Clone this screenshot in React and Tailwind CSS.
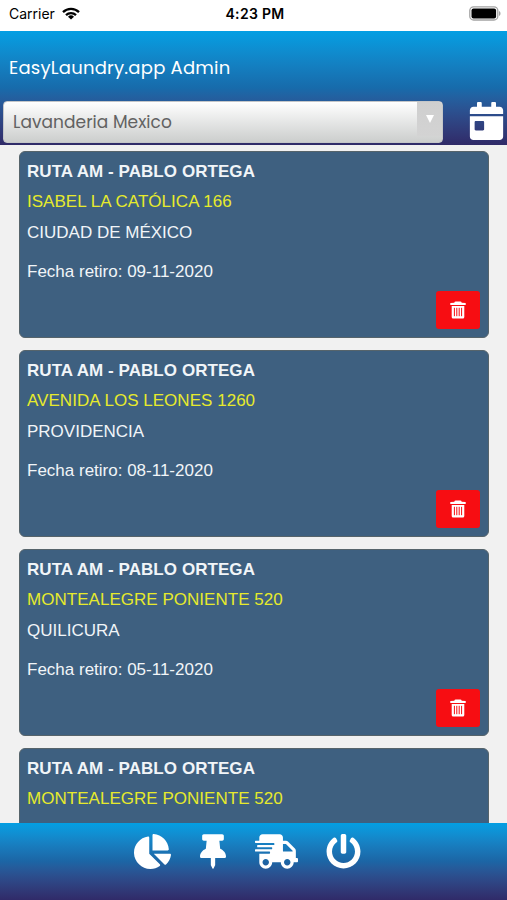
import React from 'react';
import { FaCalendarDay, FaChartPie, FaPowerOff, FaShippingFast, FaThumbtack } from 'react-icons/fa';

const retiros = [
  { id: 1, ruta: 'RUTA AM - PABLO ORTEGA', direccion: 'ISABEL LA CATÓLICA 166', comuna: 'CIUDAD DE MÉXICO', fecha: '09-11-2020' },
  { id: 2, ruta: 'RUTA AM - PABLO ORTEGA', direccion: 'AVENIDA LOS LEONES 1260', comuna: 'PROVIDENCIA', fecha: '08-11-2020' },
  { id: 3, ruta: 'RUTA AM - PABLO ORTEGA', direccion: 'MONTEALEGRE PONIENTE 520', comuna: 'QUILICURA', fecha: '05-11-2020' },
  { id: 4, ruta: 'RUTA AM - PABLO ORTEGA', direccion: 'MONTEALEGRE PONIENTE 520', comuna: 'QUILICURA', fecha: '' },
];

function StatusBar() {
  return (
    <div className="h-[31px] shrink-0 bg-white text-black grid grid-cols-3 items-center pl-[9px] pr-[6px] pb-[4px] font-['Inter',sans-serif]">
      <div className="flex items-center gap-[7px]">
        <span className="text-[14px] leading-none">Carrier</span>
        <svg width="18" height="13" viewBox="0 0 18 13" fill="none" stroke="black" strokeWidth="2.3">
          <path d="M1 5.1a11.5 11.5 0 0 1 16 0" />
          <path d="M4 8.2a7.2 7.2 0 0 1 10 0" />
          <path d="M9 12.6 6 9.8a4.3 4.3 0 0 1 6 0z" fill="black" stroke="none" />
        </svg>
      </div>
      <span className="text-[14px] leading-none font-semibold text-center tracking-[0.3px]">4:23 PM</span>
      <svg className="justify-self-end" width="32" height="15" viewBox="0 0 32 15">
        <rect x="0.8" y="0.8" width="28" height="13.2" rx="3.8" fill="white" stroke="#a3a3a3" strokeWidth="1.3" />
        <rect x="2.5" y="2.4" width="24.6" height="10" rx="2" fill="black" />
        <path d="M30 5v5c2-.8 2-4.2 0-5z" fill="#a3a3a3" />
      </svg>
    </div>
  );
}

function Header() {
  return (
    <header className="h-[114px] shrink-0 bg-linear-to-b from-[#039fe3] via-[#176bab] to-[#302a68] text-white font-['Poppins','Inter',sans-serif]">
      <h1 className="h-[70px] pt-[2px] pl-[9px] flex items-center text-[18px] tracking-[0.22px]">EasyLaundry.app Admin</h1>
      <div className="flex">
        <div className="ml-[3px] w-[440px] h-[42px] rounded-[4px] border border-[#c4c6c8] bg-linear-to-b from-white to-[#cccecd] flex overflow-hidden">
          <span className="flex-1 pl-[9px] pt-[2px] flex items-center text-[17px] text-[#626262] tracking-[0.05px]">Lavanderia Mexico</span>
          <span className="w-[25px] h-[34px] bg-linear-to-b from-[#cfcfcf] to-[#d3d3d3] flex items-center justify-center">
            <svg width="8" height="8" viewBox="0 0 8 8" fill="white">
              <path d="M0 0h8L4 8z" />
            </svg>
          </span>
        </div>
        <FaCalendarDay className="ml-[25px] mt-[1px] w-[37px] h-[38px]" />
      </div>
    </header>
  );
}

function TrashIcon() {
  return (
    <svg width="16" height="18" viewBox="0 0 16 18">
      <path fill="white" d="M4.3 1.8Q4.5.4 5.800.4h4.400q1.300 0 1.500 1.400l4 .3v1.900H.3V2.100zM1.700 5h12.600v11q0 1.500-1.500 1.500H3.200q-1.500 0-1.500-1.500z" />
      <path stroke="#f70d12" strokeWidth="1" d="M4.400 6.800v8.400M6.800 6.800v8.400M9.200 6.800v8.400M11.600 6.800v8.400" />
    </svg>
  );
}

function RetiroCard({ retiro }) {
  return (
    <div className="h-[187px] shrink-0 rounded-[6px] border border-[#56646b] bg-[#3e6080] pl-[7px] pr-[8px] pt-[4px] pb-[8px] flex flex-col text-[17px] text-[#f1f5f8]">
      <p className="h-[31px] leading-[31px] font-bold tracking-[0.06px]">{retiro.ruta}</p>
      <p className="h-[30px] leading-[30px] text-[#e6ea2c] tracking-[0.03px]">{retiro.direccion}</p>
      <p className="h-[31px] leading-[31px]">{retiro.comuna}</p>
      {retiro.fecha && <p className="mt-[8px] h-[31px] leading-[31px]">Fecha retiro: {retiro.fecha}</p>}
      <button className="mt-auto self-end w-[44px] h-[38px] rounded-[3px] bg-[#f70d12] flex items-center justify-center">
        <TrashIcon />
      </button>
    </div>
  );
}

function BottomBar() {
  return (
    <nav className="h-[77px] shrink-0 bg-linear-to-b from-[#039fe3] via-[#1c65a5] to-[#302a68] text-white flex items-start pl-[134px] pt-[11px]">
      <FaChartPie className="w-[37px] h-[35px]" />
      <FaThumbtack className="ml-[29px] w-[26px] h-[35px]" />
      <FaShippingFast className="ml-[29px] w-[43px] h-[35px]" />
      <FaPowerOff className="ml-[28px] w-[35px] h-[35px]" />
    </nav>
  );
}

export default function App() {
  return (
    <div className="w-[507px] h-[900px] flex flex-col overflow-hidden bg-[#f1f1f1] font-['Liberation_Sans',Arial,sans-serif]">
      <StatusBar />
      <Header />
      <main className="flex-1 min-h-0 overflow-hidden flex flex-col gap-3 pt-[6px] pl-[19px] pr-[18px]">
        {retiros.map((retiro) => (
          <RetiroCard key={retiro.id} retiro={retiro} />
        ))}
      </main>
      <BottomBar />
    </div>
  );
}
